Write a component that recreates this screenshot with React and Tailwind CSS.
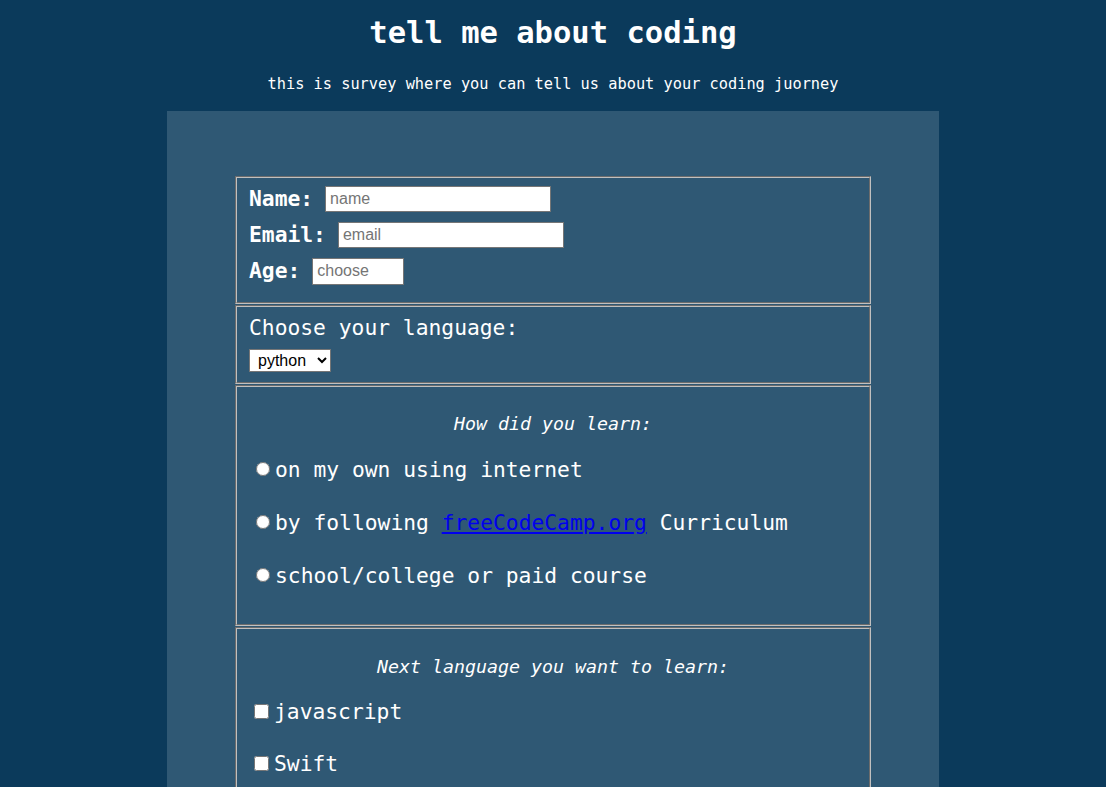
export default function App() {
  const mono = "font-['DejaVu_Sans_Mono',monospace]";
  const inputCls =
    "bg-white border border-[#767676] px-[4px] h-[26px] text-[16px] font-normal text-black font-['Liberation_Sans',Arial,sans-serif] placeholder:text-[#757575] outline-none";
  const fs = "border-2 [border-style:groove] border-[#c0c0c0] mx-0";
  return (
    <div className={`min-h-[787px] bg-[#0b3a5b] text-white ${mono}`}>
      <h1 className="text-center text-[30.5px] font-bold leading-none pt-[18px] h-[70px]">
        tell me about coding
      </h1>
      <p className="text-center text-[15.3px] leading-none h-[41px] pt-[7px]">
        this is survey where you can tell us about your coding juorney
      </p>
      <div className="mx-auto w-[772px] bg-[#2f5874] pt-[65px] px-[68px] min-h-[700px]">
        <form className="flex flex-col gap-[1px]">
          <fieldset className={`${fs} h-[128px] pt-[3px] px-[12px]`}>
            <div className="flex items-center h-[36px] text-[21.3px] font-bold">
              <label htmlFor="name">Name:</label>
              <input id="name" placeholder="name" className={`${inputCls} ml-[12px] w-[226px]`} />
            </div>
            <div className="flex items-center h-[36px] text-[21.3px] font-bold">
              <label htmlFor="email">Email:</label>
              <input id="email" placeholder="email" className={`${inputCls} ml-[12px] w-[226px]`} />
            </div>
            <div className="flex items-center h-[36px] text-[21.3px] font-bold">
              <label htmlFor="age">Age:</label>
              <input id="age" placeholder="choose" className={`${inputCls} ml-[12px] w-[92px] h-[27px]`} />
            </div>
          </fieldset>
          <fieldset className={`${fs} h-[79px] px-[12px] pt-[8px]`}>
            <div className="text-[21.3px] leading-[26px]">Choose your language:</div>
            <select className="mt-[8px] h-[23px] w-[82px] bg-white text-black border border-[#767676] text-[16px] font-['Liberation_Sans',Arial,sans-serif] pl-[4px]">
              <option>python</option>
              <option>javascript</option>
              <option>Swift</option>
            </select>
          </fieldset>
          <fieldset className={`${fs} h-[241px] px-[12px] pt-[25px]`}>
            <div className="text-center italic text-[18.3px] leading-[24px]">How did you learn:</div>
            <div className="mt-[7px] flex flex-col">
              {[
                <>on my own using internet</>,
                <>
                  by following{" "}
                  <a href="#" className="text-[#0000ee] underline">freeCodeCamp.org</a>{" "}
                  Curriculum
                </>,
                <>school/college or paid course</>,
              ].map((t, i) => (
                <label key={i} className="flex items-center h-[53px] text-[21.3px] leading-none">
                  <input type="radio" name="learn" className="ml-[7px] mr-[5px] w-[14px] h-[14px] mb-[2px] accent-white" />
                  <span>{t}</span>
                </label>
              ))}
            </div>
          </fieldset>
          <fieldset className={`${fs} h-[200px] px-[12px] pt-[26px]`}>
            <div className="text-center italic text-[18.3px] leading-[24px]">Next language you want to learn:</div>
            <div className="mt-[7px] flex flex-col">
              {["javascript", "Swift"].map((t) => (
                <label key={t} className="flex items-center h-[52px] text-[21.3px] leading-none">
                  <input type="checkbox" className="ml-[5px] mr-[5px] w-[15px] h-[15px] mb-[2px]" />
                  <span>{t}</span>
                </label>
              ))}
            </div>
          </fieldset>
        </form>
      </div>
    </div>
  );
}
